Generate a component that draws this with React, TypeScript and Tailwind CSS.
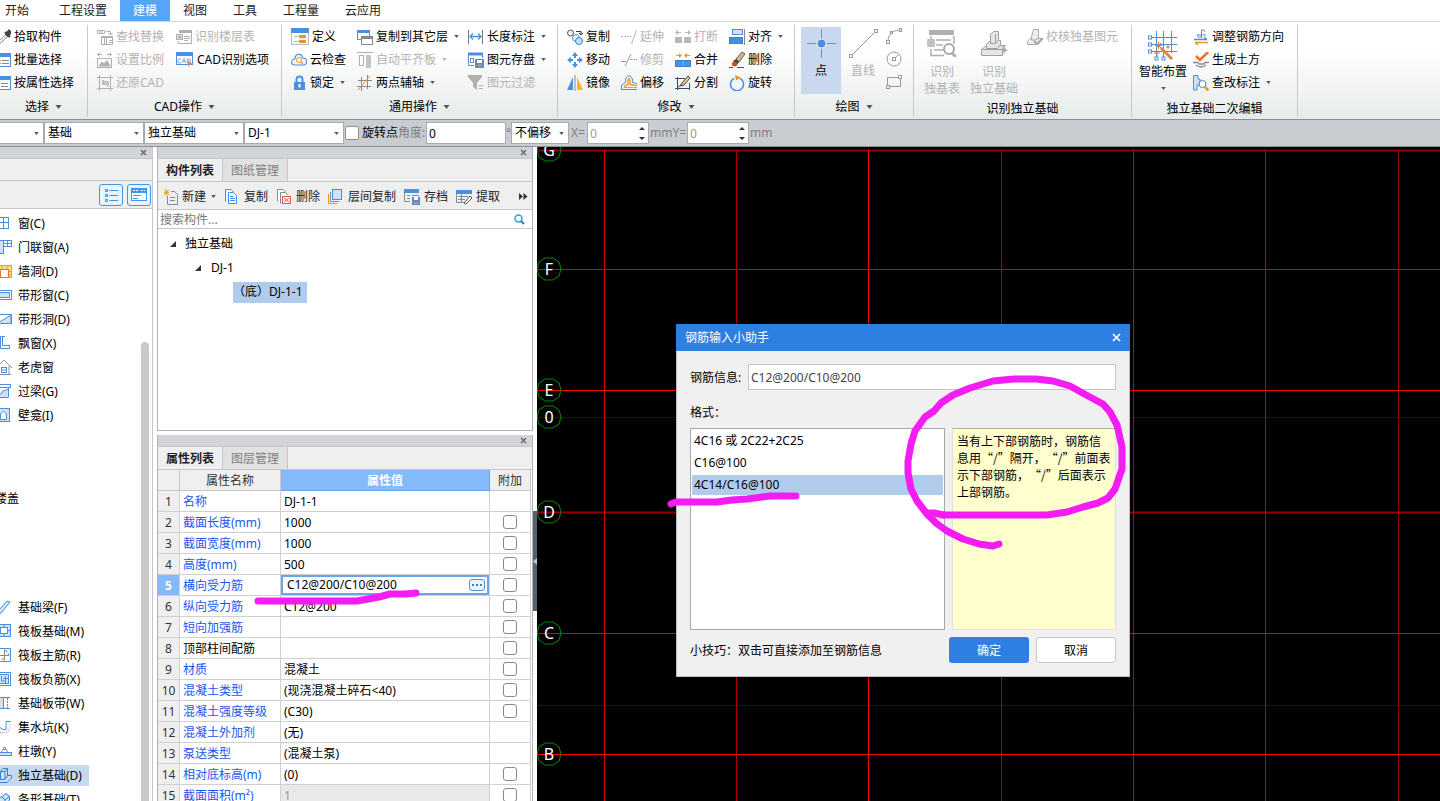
import React, { useState } from 'react';

const BLUE = '#4a90e2';
const PALE = '#cfe2f8';
const GRAY = '#b0b0b0';
const SLATE = '#7f8b96';
const ORANGE = '#f0922a';

const icons: Record<string, React.ReactNode> = {
  pick: (
    <g fill="none">
      <path d="M4 12L11 5L13 7L6 14L3 15Z" fill="#e8e8e8" stroke="#9a9a9a" />
      <path d="M10 3L15 8M11 5L14 1.5L16 3.5L13 7Z" stroke="#444" strokeWidth="2" fill="#444" />
    </g>
  ),
  batch: (
    <g fill="none" stroke={BLUE}>
      <rect x="0.5" y="1.5" width="15" height="13" fill="#fff" />
      <path d="M0 3H16" strokeWidth="4" />
      <path d="M7 8.500H14M7 11.500H14" stroke={SLATE} />
      <path d="M4 8.500H6M4 11.500H6" stroke={ORANGE} />
    </g>
  ),
  byProp: (
    <g fill="none" stroke={BLUE}>
      <rect x="0.500" y="1.500" width="15" height="13" fill="#fff" />
      <path d="M0 3H16" strokeWidth="4" />
      <path d="M6 8.500H13M6 11.500H13" stroke={SLATE} />
    </g>
  ),
  findReplace: (
    <g fill="none" stroke={GRAY}>
      <path d="M0.500 1.500H7.500V4.500H0.500ZM3 1.500V4.500M5 1.500V4.500M9 2.500H13.500V6M11.500 4L13.500 6L15.500 4" />
      <path d="M4.500 7.500H15.500V15.500H4.500Z" />
      <path d="M4 8H16" strokeWidth="2" />
      <path d="M7.500 9V15M9.500 9V15M12 11.500H15M12 13.500H15" />
    </g>
  ),
  scale: (
    <g fill="none" stroke={GRAY}>
      <path d="M0 2.500H5M2.500 0.500L0.500 2.500L2.500 4.500M10 2.500H15M12.500 0.500L14.500 2.500L12.500 4.500" />
      <rect x="0.500" y="6.500" width="14" height="9" />
      <path d="M2 14L5 10L7 12L10 8.500L13 14Z" fill={GRAY} />
    </g>
  ),
  restore: (
    <g fill="none" stroke={GRAY}>
      <path d="M2.500 0V16M0 2.500H16M13.500 0V16M0 13.500H16" />
      <path d="M10.500 11.500C12.500 7 10 5 6 8M6 5V9H10" strokeWidth="1.500" />
    </g>
  ),
  floorTable: (
    <g fill="none" stroke={GRAY}>
      <path d="M4 1.500H15.500V14.500H2V12" />
      <path d="M3 2.500H16" strokeWidth="3" />
      <rect x="0.500" y="5.500" width="6" height="5" />
      <rect x="2" y="7" width="3" height="2" fill={GRAY} />
      <path d="M8 7.500H14M8 9.500H14M8 11.500H12" />
    </g>
  ),
  cad: (
    <g>
      <rect x="0.500" y="1.500" width="16" height="12" fill="#fff" stroke={BLUE} />
      <rect x="0" y="1" width="17" height="4" fill={BLUE} />
      <path d="M5 8H3Q2 8 2 9V11Q2 12 3 12H5M6 12L8 7.500L10 12M7 10.500H9M11.500 8V12H13Q14.500 11.500 14.500 10Q14.500 8.500 13 8Z" fill="none" stroke="#79aeea" />
      <path d="M11.500 9L16.500 13L14 13.500L12 16Z" fill="#f08050" />
    </g>
  ),
  define: (
    <g>
      <rect x="0.500" y="1.500" width="17" height="15" fill="#fafafa" stroke="#b8bcc2" />
      <rect x="0" y="0" width="18" height="5" fill={BLUE} />
      <rect x="8" y="7" width="7" height="3" fill={ORANGE} />
      <rect x="8" y="12" width="7" height="3" fill={ORANGE} />
      <path d="M3 8.500H7M3 13.500H7" stroke="#b0b5bb" />
    </g>
  ),
  cloud: (
    <g fill="none">
      <path d="M4 13C-0.500 13 -0.500 7 4 7C4 1 11 1 11.500 6C17 6 17 13 12 13Z" stroke={BLUE} strokeWidth="1.200" />
      <circle cx="8" cy="8" r="2.500" stroke={ORANGE} />
      <path d="M10 10L12 12" stroke={ORANGE} strokeWidth="1.500" />
    </g>
  ),
  lock: (
    <g>
      <path d="M5.500 8V4.500C5.500 0.500 11.500 0.500 11.500 4.500V8" fill="none" stroke={BLUE} strokeWidth="2" />
      <rect x="3" y="7" width="11" height="8" fill={BLUE} />
      <path d="M8.500 9V12.500" stroke="#fff" strokeWidth="2" />
    </g>
  ),
  copyLayer: (
    <g strokeWidth="1">
      <rect x="0.500" y="1.500" width="12" height="9" fill="#fff" stroke={BLUE} />
      <rect x="0" y="1" width="13" height="3" fill={BLUE} />
      <rect x="4.500" y="7.500" width="11" height="8" fill="#fff" stroke={SLATE} />
      <rect x="4" y="7" width="12" height="3" fill={SLATE} />
    </g>
  ),
  alignSlab: (
    <g>
      <path d="M0 0.500H16" stroke={GRAY} />
      <rect x="2.500" y="3.500" width="4" height="10" fill="none" stroke={GRAY} />
      <rect x="9" y="3" width="5" height="13" fill="#c4c4c4" />
    </g>
  ),
  twoAxis: (
    <g fill="none" stroke={SLATE}>
      <path d="M4.500 2V16M10.500 0V14M1 5.500H15M0 11.500H14" />
      <path d="M1 15L13 1" stroke={ORANGE} />
    </g>
  ),
  lenDim: (
    <g fill="none" stroke={BLUE}>
      <path d="M0.500 1V15M14.500 1V15" stroke="#6b7a8a" />
      <path d="M2 7.500H13M5 4.500L2 7.500L5 10.500M10 4.500L13 7.500L10 10.500" strokeWidth="1.300" />
    </g>
  ),
  saveEl: (
    <g fill="none" stroke={BLUE}>
      <path d="M0.500 1.500H14.500V6M0.500 1.500V13.500H6" />
      <path d="M0 2H15" strokeWidth="3" />
      <rect x="2.500" y="6.500" width="3" height="4" stroke={SLATE} />
      <path d="M7.500 7.500H15.500V15.500H7.500Z" fill={BLUE} />
      <path d="M9 8H14V11H9Z" fill="#fff" stroke="none" />
      <path d="M10 13.500H14" stroke={ORANGE} strokeWidth="2" />
    </g>
  ),
  filter: (
    <g>
      <path d="M0 0H14V2L9 8V15L5 12V8L0 2Z" fill={GRAY} />
      <path d="M11 10.500H15M11 13.500H15" stroke={GRAY} />
    </g>
  ),
  copy: (
    <g fill="#eef2f6">
      <circle cx="3.500" cy="4" r="3" stroke="#555" />
      <circle cx="9" cy="9" r="3.500" stroke={BLUE} />
      <circle cx="12" cy="12" r="3.500" stroke="#2d87d0" fill="#bfe0f8" />
      <path d="M9 2.500H14V6M12 4L14 6L16 4" stroke="#333" fill="none" />
    </g>
  ),
  move: (
    <g fill={BLUE}>
      <path d="M8 0L11 4H9V6H7V4H5ZM8 16L5 12H7V10H9V12H11ZM0 8L4 5V7H6V9H4V11ZM16 8L12 11V9H10V7H12V5Z" />
    </g>
  ),
  mirror: (
    <g>
      <path d="M6 2V15H0Z" fill={BLUE} />
      <path d="M10 2V15H16Z" fill="#f7b52c" />
      <path d="M8 0V16" stroke="#888" />
    </g>
  ),
  extend: (
    <g stroke={GRAY} fill="none">
      <path d="M0 7.500H10" strokeDasharray="2 1" />
      <path d="M15 1V3L11 13V15" />
    </g>
  ),
  trim: (
    <g stroke="#9a9a9a" fill="none">
      <path d="M0 9.500H5M4 14L10 2" />
      <path d="M9 7.500H16" strokeDasharray="2 1" />
    </g>
  ),
  offset: (
    <g fill="none">
      <path d="M0.500 14V10L4.500 7.500V4Q8 -2.500 11.500 4V7.500L16 8.500" stroke={BLUE} />
      <path d="M3.500 12V11L7 9.500V4.500Q8 3 9 4.500V9.500L16 10.500" stroke="#f0a020" strokeWidth="1.500" />
      <path d="M0 14.500H16" stroke={BLUE} />
      <path d="M3 12.500H16" stroke="#f0a020" />
    </g>
  ),
  break: (
    <g fill="#b8b8b8">
      <path d="M0 3.500L3 1V3H6V4H3V6ZM16 3.500L13 1V3H10V4H13V6Z" />
      <rect x="0" y="8" width="7" height="6" />
      <rect x="9" y="8" width="7" height="6" />
    </g>
  ),
  merge: (
    <g>
      <path d="M7 3.500L4 1V3H1V4H4V6ZM9 3.500L12 1V3H15V4H12V6Z" fill={ORANGE} />
      <rect x="0.500" y="8.500" width="15" height="6" fill={BLUE} stroke="#3f7fd0" />
      <path d="M8 9V14" stroke="#7db3f0" />
    </g>
  ),
  split: (
    <g fill="none" stroke="#3a4a70">
      <path d="M0 3.500H10M2.500 2V15M0 13.500H15M14.500 8V15" />
      <path d="M5 11L7 8L13 1L15 3L9 10Z" fill="#e8c89a" stroke="#444" />
      <path d="M2 13L6 10" />
    </g>
  ),
  alignTo: (
    <g>
      <rect x="3.500" y="0.500" width="10" height="5" fill={PALE} stroke={BLUE} />
      <rect x="0.500" y="8.500" width="13" height="6" fill={BLUE} stroke="#3f7fd0" />
      <path d="M15.500 0V16" stroke={SLATE} />
    </g>
  ),
  erase: (
    <g>
      <path d="M7 7L13 0L16 2L10 10Z" fill="#d8b47c" stroke="#444" strokeWidth="0.800" />
      <path d="M4 9L7 7L10 10L8 13Z" fill="#444" />
      <circle cx="5.500" cy="12" r="2.500" fill="#d04a1c" />
      <path d="M0 15.500H4M8 15.500H15" stroke="#555" />
    </g>
  ),
  rotate: (
    <g fill="none">
      <path d="M11 3.500A6.500 6.500 0 1 1 5 3.500" stroke={BLUE} strokeWidth="1.500" />
      <path d="M6 0L12 2.500L7 5.500Z" fill={ORANGE} />
    </g>
  ),
  point: (
    <g>
      <path d="M14.500 0V29M0 14.500H29" stroke="#7d8fa6" />
      <circle cx="14.500" cy="14.500" r="4.500" fill={BLUE} stroke="#fff" />
    </g>
  ),
  line: (
    <g fill="none" stroke="#9a9a9a">
      <path d="M4 25L25 4" />
      <rect x="0.500" y="25.500" width="3" height="3" />
      <rect x="25.500" y="0.500" width="3" height="3" />
    </g>
  ),
  arc: (
    <g fill="none" stroke="#9a9a9a">
      <path d="M2 12Q3 3 13 2" />
      <rect x="0.500" y="12.500" width="3" height="3" />
      <rect x="13.500" y="0.500" width="2" height="3" />
      <rect x="4.500" y="3.500" width="2" height="2" />
    </g>
  ),
  circle: (
    <g fill="none" stroke="#9a9a9a">
      <circle cx="8" cy="8" r="7" />
      <rect x="6.500" y="6.500" width="3" height="3" />
      <path d="M9 7L12 4" />
    </g>
  ),
  rect: (
    <g fill="none" stroke="#9a9a9a">
      <rect x="1.500" y="3.500" width="13" height="9" />
      <rect x="0.500" y="11.500" width="3" height="3" fill="#fff" />
      <rect x="12.500" y="1.500" width="3" height="3" fill="#fff" />
    </g>
  ),
  recTable: (
    <g fill="none" stroke={GRAY} strokeWidth="1.500">
      <path d="M4 6V9M4 19V25.500H17M27 6V14" />
      <path d="M2 2.500H27" strokeWidth="5" />
      <rect x="1" y="10" width="6" height="6" />
      <rect x="3" y="12" width="2" height="2" fill={GRAY} />
      <path d="M9 10H24M9 15H16M7 20H16" />
      <circle cx="22" cy="19" r="5" stroke="#a8a8a8" strokeWidth="2" />
      <path d="M25 23L29 27" strokeWidth="3" />
    </g>
  ),
  footing: (
    <g fill="#e6e6e6" stroke="#9f9f9f">
      <path d="M1.500 19.500L6.500 15.500H25.500L22.500 19.500V25.500H1.500Z" />
      <path d="M1.500 19.500H22.500" />
      <path d="M6.500 14.500L10.500 10.500H20.500V14.500L17.500 18.500H6.500Z" />
      <path d="M10.500 4.500L13.500 1.500H18.500V10L15.500 13.500H10.500Z" />
      <path d="M15.500 4V13" />
      <path d="M22 15L28 21L25 21.500L24 25Z" fill="#aaa" stroke="none" />
    </g>
  ),
  verify: (
    <g fill="#eee" stroke="#a8a8a8">
      <path d="M0.500 12.500L3 9.500H14V12L11 15.500H0.500Z" />
      <path d="M4.500 7.500L6.500 0.500H11.500V8L9 11H4.500Z" />
      <path d="M7 12L10 15L16 9" fill="none" strokeWidth="2" />
    </g>
  ),
  smart: (
    <g fill="none" stroke={BLUE}>
      <path d="M8.500 0V26M15.500 0V26M23.500 0V22M3 6.500H29M3 13.500H29M3 20.500H29" />
      <rect x="0.500" y="5" width="3" height="3" fill="#fff" />
      <rect x="0.500" y="12" width="3" height="3" fill="#fff" />
      <rect x="0.500" y="19" width="3" height="3" fill="#fff" />
      <rect x="7" y="26" width="3" height="3" fill="#fff" />
      <rect x="14" y="26" width="3" height="3" fill="#fff" />
      <path d="M13 17L24 28" stroke="#d98b3a" strokeWidth="3" />
      <path d="M10.500 11V18M7 14.500H14M8 12L13 17M13 12L8 17M20 14V18M18 16H22M9 19V25M6 22H12" stroke="#f07038" />
    </g>
  ),
  rebarDir: (
    <g fill="none">
      <path d="M8.500 1V9M4 6H13M5 6Q4 9 8 8M8 1Q12 0 12 3" stroke={SLATE} />
      <path d="M1 10.500H14M11 8L14 10.500" stroke={BLUE} strokeWidth="1.300" />
      <path d="M15 13.500H2M5 16L2 13.500" stroke={ORANGE} strokeWidth="1.300" />
    </g>
  ),
  earth: (
    <g fill="none">
      <path d="M3 4L7 8L15 0" stroke="#f07028" strokeWidth="2.500" />
      <path d="M0 10.500H5L6 12H11L12 10.500H16M3 13Q8 17 13 13" stroke={SLATE} strokeWidth="1.300" />
    </g>
  ),
  checkDim: (
    <g fill="none">
      <path d="M0.500 0.500H5V4H7V10H4V15H0.500Z" fill={PALE} stroke={BLUE} />
      <circle cx="9.500" cy="9" r="3.500" fill="#fff" stroke="#4f7fb8" />
      <path d="M12 12L15.500 15.500" stroke={ORANGE} strokeWidth="2.500" />
    </g>
  ),
  newDoc: (
    <g fill="none">
      <path d="M3.500 7V15.500H13.500V5.500L10.500 2.500H7" stroke={SLATE} />
      <path d="M6 8.500H11M6 11.500H11" stroke={SLATE} />
      <path d="M0 1L5 6M5 1L0 6M2.500 0V7M0 3.500H5" stroke="#f0a040" />
    </g>
  ),
  copyDoc: (
    <g fill="#fff" stroke={BLUE}>
      <path d="M1.500 12.500V0.500H7L9.500 3" />
      <path d="M4.500 3.500H9.500L12.500 6.500V14.500H4.500Z" />
      <path d="M6 7.500H9M6 9.500H11M6 11.500H11" />
    </g>
  ),
  delDoc: (
    <g fill="#fff" stroke={SLATE}>
      <path d="M1.500 12.500V0.500H7L9.500 3" />
      <path d="M4.500 14.500V3.500H9.500L11.500 6" />
      <rect x="6.500" y="7.500" width="8" height="7" stroke="#e05a3c" />
      <path d="M8 9L13 13M13 9L8 13" stroke="#e05a3c" />
    </g>
  ),
  layerCopy: (
    <g fill="none">
      <rect x="4.500" y="0.500" width="9" height="10" fill={PALE} stroke={BLUE} />
      <path d="M2.500 3V12.500H11" stroke={SLATE} />
      <path d="M0.500 5V14.500H9" stroke={ORANGE} />
    </g>
  ),
  archive: (
    <g fill="none" stroke={SLATE}>
      <path d="M0.500 2V12.500H6M3 6.500H6M3 9.500H6M8 6.500H15" />
      <path d="M0 2H15" stroke={BLUE} strokeWidth="4" />
      <rect x="8" y="8" width="8" height="8" fill={BLUE} stroke="none" />
      <rect x="10" y="8" width="4" height="3" fill="#fff" stroke="none" />
      <path d="M10 14H14" stroke={ORANGE} strokeWidth="2" />
    </g>
  ),
  extract: (
    <g fill="none" stroke={SLATE}>
      <path d="M0.500 3V13.500H9M2 7.500H12M2 10.500H9M5.500 5V13" />
      <path d="M0 3H16" stroke={BLUE} strokeWidth="4" />
      <path d="M8 14L14 7L16 9L10 15Z" fill="#fff" stroke="#555" />
    </g>
  ),
  window: (
    <g fill="#fff" stroke={BLUE}>
      <rect x="1.500" y="2.500" width="11" height="11" />
      <path d="M7.500 3V13M2 7.500H12" />
    </g>
  ),
  doorWindow: (
    <g fill={PALE} stroke={BLUE}>
      <rect x="1.500" y="1.500" width="6" height="13" />
      <rect x="7.500" y="1.500" width="8" height="6" fill="#fff" />
      <path d="M11.500 2V7M8 4.500H15" />
    </g>
  ),
  wallHole: (
    <g fill="#ffd98a" stroke="#f0a020">
      <rect x="1.500" y="2.500" width="14" height="12" />
      <path d="M6 2V6M11 2V6M12 8.500H16M12 12H16" />
      <rect x="4.500" y="6.500" width="8" height="8" fill="#fff" stroke="#f07028" />
    </g>
  ),
  stripWindow: (
    <g fill="#fff" stroke={BLUE}>
      <rect x="0.500" y="3.500" width="15" height="9" />
      <rect x="2.500" y="5.500" width="11" height="5" fill={PALE} />
    </g>
  ),
  stripHole: (
    <g fill="#fff" stroke={BLUE}>
      <rect x="0.500" y="3.500" width="15" height="9" />
      <path d="M1 12.500L15 4V12.500Z" fill={PALE} />
    </g>
  ),
  bay: <path d="M9 1.500H4.500V13.500H13.500V10.500H6.500V1.500" fill="none" stroke={BLUE} />,
  dormer: (
    <g fill="none" stroke="#8a929c">
      <path d="M0 9L8 1L16 9M3.500 8V15.500H15M13 7V15" />
      <rect x="5.500" y="8.500" width="5" height="5" stroke={BLUE} />
      <path d="M6 11H10" stroke={BLUE} />
    </g>
  ),
  lintel: (
    <g fill={PALE} stroke={BLUE}>
      <rect x="0.500" y="1.500" width="14" height="3" fill="#fff" />
      <path d="M12.500 5V14.500H3V12L6 10V8.500L12.500 6" />
    </g>
  ),
  niche: (
    <g fill={PALE} stroke={BLUE}>
      <rect x="1.500" y="1.500" width="12" height="13" />
      <path d="M4.500 12.500V7L7.500 4L10.500 7V12.500Z" fill="#fff" />
    </g>
  ),
  beam: <path d="M2 12L11 2L14 3L5 14L2 15Z" fill={PALE} stroke={BLUE} />,
  raft: (
    <g fill="none" stroke={BLUE}>
      <rect x="1.500" y="1.500" width="13" height="12" fill={PALE} />
      <rect x="4.500" y="4.500" width="7" height="6" fill="#fff" />
      <path d="M8 2V4M8 11V13M2 7.500H4M12 7.500H14" />
    </g>
  ),
  raftMain: (
    <g fill="none" stroke={BLUE}>
      <path d="M1.500 1.500H14.500V14.500H1.500" />
      <path d="M8.500 3V13Q6 13 6 11M8.500 3Q11 3 11 5M4 8.500H13Q13 6 11.500 6" stroke={SLATE} />
    </g>
  ),
  raftNeg: (
    <g fill={PALE} stroke={BLUE}>
      <rect x="1.500" y="1.500" width="13" height="13" fill="#fff" />
      <rect x="1.500" y="3.500" width="11" height="9" />
      <path d="M5.500 5V10H9M9.500 5V12M7 7.500H12" fill="none" />
    </g>
  ),
  band: (
    <g fill={PALE} stroke={BLUE}>
      <path d="M0 2.500H14M0 13.500H14" />
      <rect x="1" y="3" width="6" height="10" stroke="none" />
      <path d="M7.500 3V13" />
      <path d="M11.500 3V13" strokeDasharray="2 1" />
    </g>
  ),
  sump: (
    <g fill="none" stroke={BLUE}>
      <path d="M1 8.500H4L7 10.500H10V2.500H15" />
      <path d="M2 13L6 14L12 13L14 8V5" stroke="#999" strokeDasharray="1 1" />
    </g>
  ),
  pier: (
    <g fill="#fff" stroke={BLUE}>
      <rect x="0.500" y="9.500" width="15" height="3" fill={PALE} />
      <path d="M5.500 9L6.500 6.500H10.500L11.500 9" stroke="#8a929c" />
      <path d="M7.500 6V4.500H9.500V6" stroke="#8a929c" />
    </g>
  ),
  isolated: (
    <g fill={PALE} stroke="#2f80dd">
      <path d="M1.500 12.500L5 8.500H15.500V11L11 15.500H1.500Z" />
      <path d="M4.500 4.500L7 1.500H11.500V9L9 12.500H4.500Z" />
      <path d="M9 4.500V12M4.500 4.500H9L11.500 1.500" />
    </g>
  ),
  strip: (
    <g fill={PALE} stroke="#2f80dd">
      <path d="M1.500 14.500V7.500L6 5.500L10 2.500L13.500 5.500V9L8 14.500Z" />
      <path d="M6 6L9 9V14M9 9L13 5.500" />
    </g>
  ),
};

const Icon = ({ name, w = 16, h = 16 }: { name: string; w?: number; h?: number }) => (
  <svg width={w} height={h} viewBox={`0 0 ${w} ${h}`} className="shrink-0" aria-hidden="true">
    {icons[name]}
  </svg>
);

const Caret = ({ large = false, faded = false }: { large?: boolean; faded?: boolean }) => (
  <svg width={large ? 7 : 5} height={large ? 4 : 3} viewBox="0 0 6 4" className="shrink-0" aria-hidden="true">
    <path d="M0 0H6L3 4Z" fill={faded ? '#b5b5b5' : '#555'} />
  </svg>
);

type Item = { icon: string; label: string; caret?: boolean; off?: boolean; w?: number };

const RibbonItem = ({ icon, label, caret, off, w }: Item) => (
  <button disabled={off} className="flex h-[23px] items-center gap-[3px] whitespace-nowrap disabled:text-[#b3b3b3]">
    <Icon name={icon} w={w} h={w && w > 17 ? 17 : 16} />
    {label}
    {caret && (
      <span className="ml-[3px] flex">
        <Caret faded={off} />
      </span>
    )}
  </button>
);

const Column = ({ items, className = '' }: { items: Item[]; className?: string }) => (
  <div className={`flex shrink-0 flex-col items-start ${className}`}>
    {items.map((it) => (
      <RibbonItem key={it.label} {...it} />
    ))}
  </div>
);

const Group = ({ title, caret = true, className = '', children }: { title: string; caret?: boolean; className?: string; children: React.ReactNode }) => (
  <section className={`flex shrink-0 flex-col border-r border-[#c5c9cc] ${className}`}>
    <div className="flex h-[69px]">{children}</div>
    <div className={`flex h-[23px] items-center justify-center gap-[6px] whitespace-nowrap ${caret ? 'pt-[3px]' : 'pt-[7px]'}`}>
      {title}
      {caret && <Caret large />}
    </div>
  </section>
);

const menus = ['工程设置', '建模', '视图', '工具', '工程量', '云应用'];

const Ribbon = () => (
  <div className="flex h-[99px] shrink-0 overflow-hidden border-t border-b border-t-[#d5d7d9] border-b-[#8b9192] bg-gradient-to-b from-white from-30% to-[#e6ebea] pt-[3px] pb-[2px]">
    <Group title="选择" className="w-[88px]">
      <Column
        className="-ml-[5px]"
        items={[
          { icon: 'pick', label: '拾取构件' },
          { icon: 'batch', label: '批量选择' },
          { icon: 'byProp', label: '按属性选择' },
        ]}
      />
    </Group>
    <Group title="CAD操作" className="w-[194px]">
      <Column
        className="ml-[9px] w-[79px]"
        items={[
          { icon: 'findReplace', label: '查找替换', off: true },
          { icon: 'scale', label: '设置比例', off: true },
          { icon: 'restore', label: '还原CAD', off: true },
        ]}
      />
      <Column
        items={[
          { icon: 'floorTable', label: '识别楼层表', off: true },
          { icon: 'cad', label: 'CAD识别选项', w: 18 },
        ]}
      />
    </Group>
    <Group title="通用操作" className="w-[276px]">
      <Column
        className="ml-[9px] w-[66px]"
        items={[
          { icon: 'define', label: '定义', w: 18 },
          { icon: 'cloud', label: '云检查' },
          { icon: 'lock', label: '锁定', caret: true },
        ]}
      />
      <Column
        className="w-[111px]"
        items={[
          { icon: 'copyLayer', label: '复制到其它层', caret: true },
          { icon: 'alignSlab', label: '自动平齐板', caret: true, off: true },
          { icon: 'twoAxis', label: '两点辅轴', caret: true },
        ]}
      />
      <Column
        items={[
          { icon: 'lenDim', label: '长度标注', caret: true },
          { icon: 'saveEl', label: '图元存盘', caret: true },
          { icon: 'filter', label: '图元过滤', off: true },
        ]}
      />
    </Group>
    <Group title="修改" className="w-[237px]">
      <Column
        className="ml-[9px] w-[54px]"
        items={[
          { icon: 'copy', label: '复制' },
          { icon: 'move', label: '移动' },
          { icon: 'mirror', label: '镜像' },
        ]}
      />
      <Column
        className="w-[54px]"
        items={[
          { icon: 'extend', label: '延伸', off: true },
          { icon: 'trim', label: '修剪', off: true },
          { icon: 'offset', label: '偏移' },
        ]}
      />
      <Column
        className="w-[54px]"
        items={[
          { icon: 'break', label: '打断', off: true },
          { icon: 'merge', label: '合并' },
          { icon: 'split', label: '分割' },
        ]}
      />
      <Column
        items={[
          { icon: 'alignTo', label: '对齐', caret: true },
          { icon: 'erase', label: '删除' },
          { icon: 'rotate', label: '旋转' },
        ]}
      />
    </Group>
    <Group title="绘图" className="w-[119px]">
      <button className="mt-[2px] ml-[6px] flex h-[67px] w-10 flex-col items-center gap-[5px] bg-[#c7d8ef] pt-[2px]">
        <Icon name="point" w={29} h={29} />
        点
      </button>
      <button disabled className="mt-[4px] ml-[7px] flex w-[30px] flex-col items-center gap-[5px] text-[#b3b3b3]">
        <Icon name="line" w={29} h={29} />
        直线
      </button>
      <div className="ml-[8px] flex flex-col gap-[7px] pt-[3px]">
        <Icon name="arc" />
        <Icon name="circle" />
        <Icon name="rect" />
      </div>
    </Group>
    <Group title="识别独立基础" caret={false} className="w-[218px]">
      <button disabled className="mt-[5px] ml-[4px] flex w-12 flex-col items-center gap-[6px] leading-[17px] text-[#b3b3b3]">
        <Icon name="recTable" w={30} h={27} />
        <span>
          识别
          <br />
          独基表
        </span>
      </button>
      <button disabled className="mt-[5px] ml-[4px] flex w-12 flex-col items-center gap-[6px] leading-[17px] text-[#b3b3b3]">
        <Icon name="footing" w={28} h={27} />
        <span>
          识别
          <br />
          独立基础
        </span>
      </button>
      <Column className="ml-[9px]" items={[{ icon: 'verify', label: '校核独基图元', off: true }]} />
    </Group>
    <Group title="独立基础二次编辑" caret={false} className="w-[166px]">
      <button className="mt-[6px] ml-[6px] flex w-[50px] flex-col items-center gap-[3px] whitespace-nowrap">
        <Icon name="smart" w={30} h={30} />
        智能布置
        <span className="mt-1 flex">
          <Caret />
        </span>
      </button>
      <Column
        className="ml-[5px]"
        items={[
          { icon: 'rebarDir', label: '调整钢筋方向' },
          { icon: 'earth', label: '生成土方' },
          { icon: 'checkDim', label: '查改标注', caret: true },
        ]}
      />
    </Group>
  </div>
);

const Select = ({ value, label, className }: { value: string; label: string; className: string }) => (
  <div className={`relative h-[22px] shrink-0 ${className}`}>
    <select aria-label={label} className="h-full w-full appearance-none border border-[#a7aaae] bg-white pl-[3px] text-xs text-black">
      <option>{value}</option>
    </select>
    <span className="pointer-events-none absolute top-[10px] right-[5px] flex">
      <Caret />
    </span>
  </div>
);

const Spin = ({ label }: { label: string }) => (
  <div className="relative h-[22px] w-[62px] shrink-0">
    <input aria-label={label} defaultValue="0" disabled className="h-full w-full border border-[#a7aaae] bg-white pl-[2px] text-xs text-[#9a9a9a]" />
    <svg className="absolute top-[5px] right-[4px]" width="6" height="13" aria-hidden="true">
      <path d="M0 3H6L3 0ZM0 10H6L3 13Z" fill="#333" />
    </svg>
  </div>
);

const OptionBar = () => (
  <div className="flex h-[27px] shrink-0 items-center overflow-hidden border-b border-[#8b9192] bg-[#c9ccd1] whitespace-nowrap text-[#808080]">
    <Select label="楼层" value="" className="-ml-px w-[45px]" />
    <Select label="构件大类" value="基础" className="w-[100px]" />
    <Select label="构件类型" value="独立基础" className="w-[100px]" />
    <Select label="构件" value="DJ-1" className="w-[100px]" />
    <label className="ml-[1px] flex items-center gap-[3px] text-black">
      <input type="checkbox" className="h-[14px] w-[14px] appearance-none rounded-[2px] border border-[#8f8f8f] bg-white" />
      旋转点
    </label>
    <label className="flex items-center">
      <span className="w-[28px]">角度:</span>
      <input defaultValue="0" className="h-[22px] w-[80px] border border-[#a7aaae] bg-white pl-[2px] text-xs text-black" />
    </label>
    <span className="w-[5px]">°</span>
    <Select label="偏移方式" value="不偏移" className="w-[58px]" />
    <span className="w-[18px] pl-[2px]">X=</span>
    <Spin label="X" />
    <span className="w-[38px] pl-[1px]">mmY=</span>
    <Spin label="Y" />
    <span className="pl-[1px]">mm</span>
  </div>
);

const PanelTitle = () => (
  <div className="flex h-3 shrink-0 items-center justify-end border-b border-[#c4c6cb] bg-[#d3d4d9] pr-[5px]">
    <button aria-label="关闭" className="flex">
      <svg width="7" height="7" viewBox="0 0 7 7" aria-hidden="true">
        <path d="M1 1L6 6M6 1L1 6" stroke="#666" strokeWidth="1.400" />
      </svg>
    </button>
  </div>
);

const sideTop = [
  ['window', '窗(C)'],
  ['doorWindow', '门联窗(A)'],
  ['wallHole', '墙洞(D)'],
  ['stripWindow', '带形窗(C)'],
  ['stripHole', '带形洞(D)'],
  ['bay', '飘窗(X)'],
  ['dormer', '老虎窗'],
  ['lintel', '过梁(G)'],
  ['niche', '壁龛(I)'],
];

const sideBottom = [
  ['beam', '基础梁(F)'],
  ['raft', '筏板基础(M)'],
  ['raftMain', '筏板主筋(R)'],
  ['raftNeg', '筏板负筋(X)'],
  ['band', '基础板带(W)'],
  ['sump', '集水坑(K)'],
  ['pier', '柱墩(Y)'],
  ['isolated', '独立基础(D)'],
  ['strip', '条形基础(T)'],
];

const SideList = ({ rows }: { rows: string[][] }) => (
  <ul>
    {rows.map(([icon, label]) => (
      <li key={label} className="flex h-6 items-center">
        <button className={`-ml-1 flex h-[21px] items-center gap-[6px] pr-[7px] whitespace-nowrap ${label === '独立基础(D)' ? 'bg-[#c7d8ef]' : ''}`}>
          <Icon name={icon} />
          <span className="pt-0.5">{label}</span>
        </button>
      </li>
    ))}
  </ul>
);

const Sidebar = () => (
  <aside className="flex w-[153px] shrink-0 flex-col overflow-hidden border-r border-[#c4c6cb]">
    <PanelTitle />
    <div className="h-[22px] shrink-0 border-b border-[#c4c6cb] bg-[#efefef]" />
    <div className="flex h-7 shrink-0 items-center justify-end gap-1 border-b border-[#c4c6cb] bg-[#efefef] pr-px">
      <button aria-label="列表" className="flex h-[22px] w-6 items-center justify-center rounded-[3px] border border-[#3f97f0] bg-[#eaf4fe]">
        <svg width="13" height="14" fill="none" stroke="#3f8fe8" aria-hidden="true">
          <path d="M4.500 2.500H13M4.500 7.500H13M4.500 12.500H13" />
          <path d="M0.500 1.500H2.500V3.500H0.500ZM0.500 6.500H2.500V8.500H0.500ZM0.500 11.500H2.500V13.500H0.500Z" />
        </svg>
      </button>
      <button aria-label="卡片" className="flex h-[22px] w-6 items-center justify-center rounded-[3px] border border-[#3f97f0] bg-[#eaf4fe]">
        <svg width="16" height="13" fill="none" stroke="#3f97f0" aria-hidden="true">
          <rect x="0.500" y="0.500" width="15" height="12" fill="#fff" />
          <path d="M0 2.500H16" strokeWidth="5" />
          <path d="M2 2.500H8M10 2.500H14" stroke="#fff" strokeDasharray="2 1" />
          <path d="M2 7.500H10M2 10.500H7" />
        </svg>
      </button>
    </div>
    <div className="flex flex-1 overflow-hidden">
      <div className="flex-1 overflow-hidden pt-[2px]">
        <SideList rows={sideTop} />
        <div className="flex h-[168px] items-center pb-6">
          <span className="-ml-[5px]">楼盖</span>
        </div>
        <SideList rows={sideBottom} />
      </div>
      <div className="mt-[133px] mr-[3px] h-[480px] w-2 shrink-0 rounded-full bg-[#c9c9c9]" />
    </div>
  </aside>
);

const Tabs = ({ active, other }: { active: string; other: string }) => (
  <div className="flex h-[23px] shrink-0 border-b border-[#c4c6cb] bg-[#efefef]">
    <button className="w-[65px] border-r border-[#c4c6cb] pt-0.5 font-bold text-[#222]">{active}</button>
    <button className="w-[65px] border-r border-[#c4c6cb] bg-[#e1e1e1] pt-0.5 text-[#808080]">{other}</button>
  </div>
);

const TreeArrow = () => (
  <svg width="6" height="6" aria-hidden="true">
    <path d="M6 0V6H0Z" fill="#333" />
  </svg>
);

const tools = [
  { icon: 'copyDoc', label: '复制' },
  { icon: 'delDoc', label: '删除' },
  { icon: 'layerCopy', label: '层间复制' },
  { icon: 'archive', label: '存档' },
  { icon: 'extract', label: '提取' },
];

const ComponentPanel = () => (
  <section className="flex h-[284px] shrink-0 flex-col border border-t-0 border-[#b0b2b6]">
    <PanelTitle />
    <Tabs active="构件列表" other="图纸管理" />
    <div className="flex h-7 shrink-0 items-center overflow-hidden border-b border-[#c4c6cb] bg-[#efefef] pt-0.5 pl-[6px] whitespace-nowrap text-[#222]">
      <button className="flex items-center gap-[2px]">
        <Icon name="newDoc" />
        新建
        <span className="ml-[3px] flex">
          <Caret />
        </span>
      </button>
      <div className="ml-[8px] flex gap-[8px]">
        {tools.map((t) => (
          <button key={t.label} className="flex items-center gap-[4px]">
            <Icon name={t.icon} />
            {t.label}
          </button>
        ))}
      </div>
      <button aria-label="更多" className="mr-1 ml-auto">
        <svg width="9" height="7" fill="#333" aria-hidden="true">
          <path d="M0 0L4 3.500L0 7ZM4.500 0L8.500 3.500L4.500 7Z" />
        </svg>
      </button>
    </div>
    <div className="flex h-[19px] shrink-0 items-center border-b border-[#c4c6cb] bg-white">
      <input aria-label="搜索构件" placeholder="搜索构件..." className="min-w-0 flex-1 pt-0.5 pl-[2px] text-xs placeholder:text-[#777]" />
      <svg width="11" height="11" fill="none" className="mr-[7px]" aria-hidden="true">
        <circle cx="4.500" cy="4.500" r="3.500" stroke="#3a9ad0" strokeWidth="1.500" />
        <path d="M7 7L10 10" stroke="#2b80b8" strokeWidth="2" />
      </svg>
    </div>
    <div className="flex-1 bg-white pt-[3px]">
      <div className="flex h-6 items-center gap-[9px] pl-[12px]">
        <TreeArrow />
        独立基础
      </div>
      <div className="flex h-6 items-center gap-[10px] pl-[37px]">
        <TreeArrow />
        DJ-1
      </div>
      <div className="flex h-6 items-center pl-[75px]">
        <span className="flex h-[21px] items-center bg-[#b1cbec] pr-1">（底）DJ-1-1</span>
      </div>
    </div>
  </section>
);

const props = [
  { name: '名称', value: 'DJ-1-1', noCheck: true },
  { name: '截面长度(mm)', value: '1000' },
  { name: '截面宽度(mm)', value: '1000' },
  { name: '高度(mm)', value: '500' },
  { name: '横向受力筋', value: 'C12@200/C10@200', active: true },
  { name: '纵向受力筋', value: 'C12@200' },
  { name: '短向加强筋', value: '' },
  { name: '顶部柱间配筋', value: '', plain: true },
  { name: '材质', value: '混凝土' },
  { name: '混凝土类型', value: '(现浇混凝土碎石<40)' },
  { name: '混凝土强度等级', value: '(C30)' },
  { name: '混凝土外加剂', value: '(无)', noCheck: true },
  { name: '泵送类型', value: '(混凝土泵)', noCheck: true },
  { name: '相对底标高(m)', value: '(0)' },
  { name: '截面面积(m²)', value: '1', readOnly: true },
];

const PropertyPanel = () => (
  <section className="flex flex-1 flex-col overflow-hidden border-x border-[#b0b2b6] bg-white">
    <PanelTitle />
    <Tabs active="属性列表" other="图层管理" />
    <div className="flex-1 overflow-hidden pr-px">
      <table className="w-full table-fixed border-separate border-spacing-0">
        <colgroup>
          <col className="w-[22px]" />
          <col className="w-[101px]" />
          <col />
          <col className="w-[41px]" />
        </colgroup>
        <thead>
          <tr className="h-[21px] bg-[#efefef] text-[#333]">
            <th className="border-r border-b border-[#c4c6cb] p-0" />
            <th className="border-r border-b border-[#c4c6cb] p-0 pt-0.5 font-normal">属性名称</th>
            <th className="border-r border-b border-[#6aa5e8] bg-[#82bafa] p-0 pt-0.5 font-bold text-white">属性值</th>
            <th className="border-r border-b border-[#c4c6cb] p-0 pt-0.5 font-normal">附加</th>
          </tr>
        </thead>
        <tbody>
          {props.map((p, i) => (
            <tr key={p.name} className="h-[21px]">
              <td className={`border-r border-b border-[#d0d0d0] p-0 pt-0.5 text-center ${p.active ? 'bg-[#82bafa] font-bold text-white' : 'bg-[#efefef] text-[#333]'}`}>{i + 1}</td>
              <td className={`border-r border-b border-[#d0d0d0] p-0 pt-0.5 pl-[3px] whitespace-nowrap ${p.plain ? 'text-black' : 'text-[#1a56f0]'}`}>{p.name}</td>
              {p.active ? (
                <td className="border-r border-b border-[#d0d0d0] p-0">
                  <div className="flex h-5 items-center border-2 border-[#6aa5e8] bg-white pr-[2px]">
                    <input aria-label={p.name} defaultValue={p.value} className="min-w-0 flex-1 pl-1 text-xs" />
                    <button aria-label="编辑" className="flex h-[12px] w-4 items-center justify-center rounded-[3px] border border-[#4f92d8] bg-[#eaf4fe]">
                      <svg width="10" height="2" fill="#3a80cc" aria-hidden="true">
                        <path d="M0 0H2V2H0ZM4 0H6V2H4ZM8 0H10V2H8Z" />
                      </svg>
                    </button>
                  </div>
                </td>
              ) : (
                <td className={`border-r border-b border-[#d0d0d0] p-0 pt-0.5 pl-[3px] ${p.readOnly ? 'bg-[#e9e9e9] text-[#999]' : ''}`}>{p.value}</td>
              )}
              <td className="border-r border-b border-[#d0d0d0] p-0">
                {!p.noCheck && <input type="checkbox" aria-label={`附加 ${p.name}`} className="mx-auto block h-[14px] w-[14px] appearance-none rounded-[3px] border border-[#888] bg-white" />}
              </td>
            </tr>
          ))}
        </tbody>
      </table>
    </div>
  </section>
);

const columns = [
  [67, '#e00000'],
  [199, '#b00000'],
  [331, '#ff0000'],
  [464, '#b00000'],
  [596, '#d00000'],
  [728, '#c00000'],
  [861, '#a00000'],
] as const;

const axes = [
  { y: 3, color: '#8a0000', name: 'G' },
  { y: 122, color: '#d80000', name: 'F' },
  { y: 243, color: '#ff0000', name: 'E' },
  { y: 270, color: '#480000', name: '0' },
  { y: 365, color: '#900000', name: 'D' },
  { y: 486, color: '#e00000', name: 'C' },
  { y: 558, color: '#480000' },
  { y: 607, color: '#ff0000', name: 'B' },
];

const Grid = () => (
  <svg width="100%" height="100%" className="block" aria-hidden="true">
    {axes.map((a) => (
      <line key={a.y} x1="0" x2="100%" y1={a.y + 0.5} y2={a.y + 0.5} stroke={a.color} strokeWidth={a.name === 'D' || a.name === 'G' ? 2 : 1} />
    ))}
    {columns.map(([x, color]) => (
      <line key={x} x1={x} x2={x} y1="3" y2="100%" stroke={color} strokeWidth="1" shapeRendering="crispEdges" />
    ))}
    {axes.map(
      (a) =>
        a.name && (
          <g key={a.name} transform={`translate(12 ${a.y})`}>
            <path d="M-4 -11H4L10 -7L12 0L10 7L4 11H-4L-10 7L-12 0L-10 -7Z" fill="none" stroke="#008a00" />
            <text y="6" textAnchor="middle" fontSize="16" fill="#fff">
              {a.name}
            </text>
          </g>
        )
    )}
  </svg>
);

const formats = ['4C16 或 2C22+2C25', 'C16@100', '4C14/C16@100'];

const RebarDialog = () => {
  const [selected, setSelected] = useState(2);

  return (
    <div role="dialog" aria-label="钢筋输入小助手" className="absolute top-[177px] left-[139px] w-[454px] border border-t-0 border-[#b4c0d0] bg-[#f0f0f0] pb-[13px]">
      <div className="-mx-px flex h-[27px] items-center justify-between bg-[#2d80e2] pr-[9px] pl-[9px] text-white">
        钢筋输入小助手
        <button aria-label="关闭">
          <svg width="9" height="9" aria-hidden="true">
            <path d="M1 1L8 8M8 1L1 8" stroke="#fff" strokeWidth="1.700" />
          </svg>
        </button>
      </div>
      <div className="px-[13px] pt-[13px]">
        <label className="flex items-center gap-[7px] whitespace-nowrap">
          <span className="w-[51px] pt-0.5">钢筋信息:</span>
          <input defaultValue="C12@200/C10@200" className="h-[26px] min-w-0 flex-1 border border-[#c3c5ca] bg-white pl-[2px] text-xs text-[#444]" />
        </label>
        <div className="flex h-[38px] items-center pt-[8px]">格式：</div>
        <div className="flex h-[202px] gap-[7px]">
          <ul className="w-[255px] border border-[#a8a8a8] bg-white px-px">
            {formats.map((f, i) => (
              <li key={f} className="flex h-[22px] items-center pt-[2px]">
                <button onClick={() => setSelected(i)} className={`h-5 w-full pl-[2px] text-left ${selected === i ? 'bg-[#b1cbec]' : ''}`}>
                  {f}
                </button>
              </li>
            ))}
          </ul>
          <p className="flex-1 border border-t-[#b0b0a0] border-[#e0e0e0] bg-[#ffffce] pt-[3px] pr-[3px] pl-1 font-['Noto_Sans_CJK_SC',sans-serif] leading-[17px]">
            当有上下部钢筋时，钢筋信息用“/”隔开，“/”前面表示下部钢筋，“/”后面表示上部钢筋。
          </p>
        </div>
        <div className="mt-[7px] flex items-center gap-[7px]">
          <span className="mr-auto pt-0.5">小技巧：双击可直接添加至钢筋信息</span>
          <button className="h-[26px] w-20 rounded-[3px] bg-[#2d80e2] pt-0.5 text-white">确定</button>
          <button className="h-[26px] w-20 rounded-[3px] border border-[#c6c6c6] bg-white pt-0.5">取消</button>
        </div>
      </div>
    </div>
  );
};

// Marker strokes drawn on top of the workspace
const Marks = () => (
  <svg className="pointer-events-none absolute inset-0 h-full w-full" fill="none" stroke="#f31cf3" strokeWidth="7" strokeLinecap="round" strokeLinejoin="round" aria-hidden="true">
    <path d="M258 601H357L368 599L379 597L390 594L405 594L416 593" />
    <path d="M671 504L676 502H717L732 500L747 499L770 496H789L796 496" />
    <path d="M943 515H1047L1067 512L1083 507L1098 503L1108 498L1115 489L1122 469V447L1117 425L1110 412L1103 404L1088 396L1070 386L1053 381L1036 379H1014L993 381L970 388L953 395L941 403L934 411L925 417L915 431L911 444L908 461V473L911 489L917 501L927 514L936 523L947 531L963 539L979 544L993 546L999 544" />
    <path d="M927 513L934 513L943 515" />
  </svg>
);

const App = () => {
  return (
    <div className="relative flex h-screen flex-col overflow-hidden bg-white font-['Noto_Sans','Noto_Sans_CJK_SC',sans-serif] text-xs text-black [text-spacing-trim:space-all]">
      <nav className="flex h-[21px] shrink-0 items-center whitespace-nowrap text-[#222]">
        <button className="w-[46px] pl-[5px] text-left">开始</button>
        {menus.map((m) => (
          <button key={m} className={`h-full px-[13px] ${m === '建模' ? 'bg-[#56a5f8] text-white' : ''}`}>
            {m}
          </button>
        ))}
      </nav>
      <Ribbon />
      <OptionBar />
      <main className="flex min-h-0 flex-1">
        <Sidebar />
        <div className="ml-1 flex w-[376px] shrink-0 flex-col gap-1">
          <ComponentPanel />
          <PropertyPanel />
        </div>
        <div className="flex w-1 shrink-0 flex-col pt-[364px]">
          <button aria-label="收起" className="flex h-[100px] items-center bg-[#566070]">
            <svg width="4" height="7" aria-hidden="true">
              <path d="M4 0V7L0 3.500Z" fill="#c0c6ce" />
            </svg>
          </button>
        </div>
        <div className="relative min-w-0 flex-1 bg-black">
          <Grid />
          <RebarDialog />
        </div>
      </main>
      <Marks />
    </div>
  );
};

export default App;
